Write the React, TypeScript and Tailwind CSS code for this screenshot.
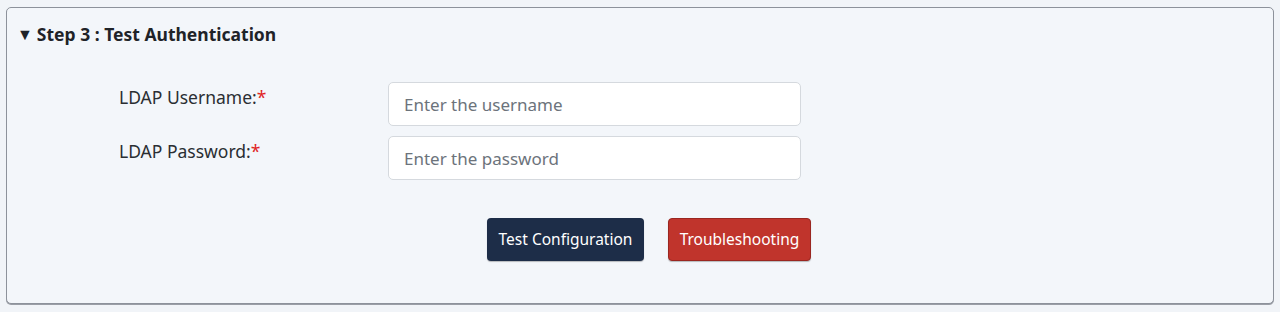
const fields = [
  { label: 'LDAP Username:', placeholder: 'Enter the username', type: 'text' },
  { label: 'LDAP Password:', placeholder: 'Enter the password', type: 'password' },
];

const App = () => {
  return (
    <div className="min-h-[312px] w-full bg-[#f1f4f8] px-[6px] pt-[7px] font-['Noto_Sans',sans-serif]">
      <section className="rounded-[5px] border border-[#8d929b] bg-[#f3f6fa] pb-[42px] shadow-[0_1px_0_#9a9ea6]">
        <h2 className="flex items-center gap-[4px] pl-[10px] pt-[14px] text-[17.5px] font-bold leading-6 text-[#1f2328]">
          <span className="text-[16px]">▼</span>
          Step 3 : Test Authentication
        </h2>
        <form className="mt-[36px] flex flex-col gap-[10px] pl-[112px]">
          {fields.map((field) => (
            <div key={field.label} className="flex items-start">
              <label className="w-[269px] pt-[3px] text-[17.5px] leading-6 text-[#2a2e33]">
                {field.label}
                <span className="text-[#e02424]">*</span>
              </label>
              <input
                type={field.type}
                placeholder={field.placeholder}
                className="h-[44px] w-[413px] rounded-[5px] border border-[#d5d9de] bg-white px-[15px] text-[17px] text-[#212529] placeholder:text-[#6c737b] focus:outline-none"
              />
            </div>
          ))}
        </form>
        <div className="mt-[38px] flex gap-[24px] pl-[480px]">
          <button
            type="button"
            className="h-[43px] w-[157px] rounded-[4px] bg-[#1d2d48] text-[15.5px] text-white shadow-[0_1px_1px_rgba(0,0,0,0.25)]"
          >
            Test Configuration
          </button>
          <button
            type="button"
            className="h-[43px] w-[143px] rounded-[4px] border border-[#9a2620] bg-[#c0342c] text-[15.5px] text-white shadow-[0_1px_1px_rgba(0,0,0,0.25)]"
          >
            Troubleshooting
          </button>
        </div>
      </section>
    </div>
  );
};

export default App;
